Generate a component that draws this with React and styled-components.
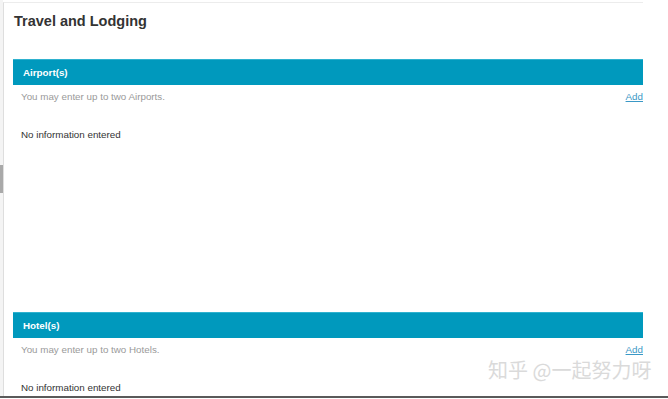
import React from "react";
import styled, { createGlobalStyle } from "styled-components";

const GlobalStyle = createGlobalStyle`
  html, body {
    margin: 0;
    padding: 0;
    background: #ffffff;
  }
  body {
    font-family: "Liberation Sans", Arial, sans-serif;
  }
`;

const sections = [
  { title: "Airport(s)", hint: "You may enter up to two Airports." },
  { title: "Hotel(s)", hint: "You may enter up to two Hotels." },
];

const App = () => {
  return (
    <Frame>
      <GlobalStyle />
      <Main>
        <Rail>
          <Thumb />
        </Rail>
        <Panel>
          <PageTitle>Travel and Lodging</PageTitle>
          {sections.map((s) => (
            <Section key={s.title}>
              <SectionBar>{s.title}</SectionBar>
              <HintRow>
                <Hint>{s.hint}</Hint>
                <AddLink href="#">Add</AddLink>
              </HintRow>
              <Empty>No information entered</Empty>
            </Section>
          ))}
        </Panel>
      </Main>
      <BottomRule />
      <Watermark>知乎 @一起努力呀</Watermark>
    </Frame>
  );
};

const Frame = styled.div`
  position: relative;
  width: 668px;
  height: 399px;
  display: flex;
  flex-direction: column;
  overflow: hidden;
`;

const Main = styled.div`
  height: 396px;
  display: flex;
  overflow: hidden;
`;

const Rail = styled.div`
  width: 3px;
  flex-shrink: 0;
  background: #f4f4f4;
  display: flex;
  flex-direction: column;
`;

const Thumb = styled.div`
  margin-top: 165px;
  height: 28px;
  background: #a9a9a9;
`;

const Panel = styled.div`
  margin-top: 2px;
  width: 630px;
  padding-left: 9px;
  border-left: 1px solid #dedede;
  border-top: 1px solid #ececec;
  display: flex;
  flex-direction: column;
`;

const PageTitle = styled.h1`
  margin: 9px 0 29px 1px;
  font-size: 14.5px;
  line-height: 18px;
  font-weight: bold;
  color: #333333;
`;

const Section = styled.section`
  min-height: 253px;
  display: flex;
  flex-direction: column;
`;

const SectionBar = styled.div`
  height: 26px;
  padding-left: 10px;
  display: flex;
  align-items: center;
  background: #0099bd;
  border-top: 1px solid #2fb2cf;
  box-sizing: border-box;
  color: #ffffff;
  font-size: 9.8px;
  font-weight: bold;
`;

const HintRow = styled.div`
  margin-top: 5px;
  padding-left: 8px;
  display: flex;
  justify-content: space-between;
  font-size: 9.8px;
  line-height: 14px;
`;

const Hint = styled.span`
  color: #9a9a9a;
`;

const AddLink = styled.a`
  color: #3a98c6;
  text-decoration: underline;
`;

const Empty = styled.div`
  margin-top: 24px;
  padding-left: 8px;
  font-size: 9.8px;
  line-height: 14px;
  color: #333333;
`;

const BottomRule = styled.div`
  height: 2px;
  background: #5a5a5a;
`;

const Watermark = styled.div`
  position: absolute;
  left: 488px;
  top: 359px;
  font-family: "Noto Sans CJK SC", "Noto Sans", sans-serif;
  font-size: 20px;
  line-height: 22px;
  color: #dadada;
  white-space: nowrap;
  pointer-events: none;
`;

export default App;
